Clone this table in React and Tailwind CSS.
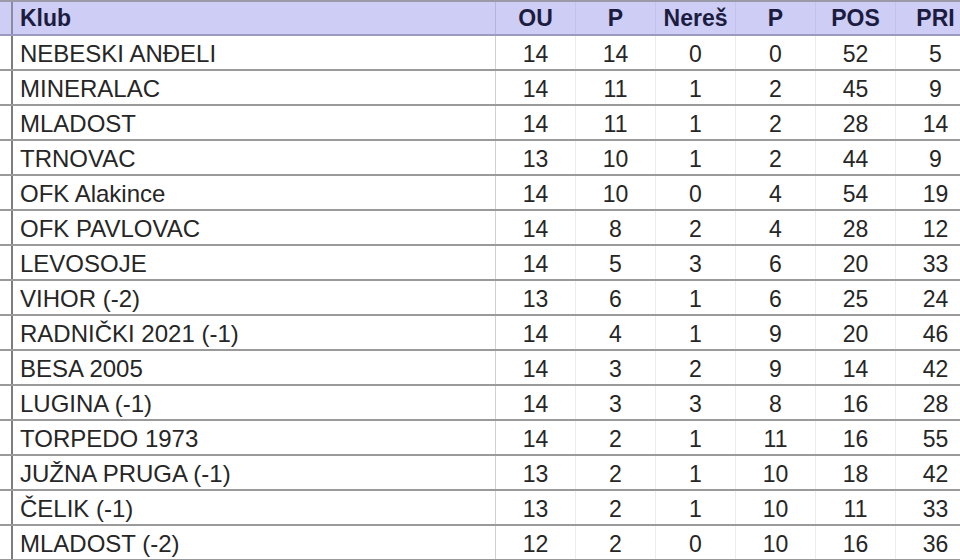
const ROWS = [
  ["NEBESKI ANĐELI", 14, 14, 0, 0, 52, 5],
  ["MINERALAC", 14, 11, 1, 2, 45, 9],
  ["MLADOST", 14, 11, 1, 2, 28, 14],
  ["TRNOVAC", 13, 10, 1, 2, 44, 9],
  ["OFK Alakince", 14, 10, 0, 4, 54, 19],
  ["OFK PAVLOVAC", 14, 8, 2, 4, 28, 12],
  ["LEVOSOJE", 14, 5, 3, 6, 20, 33],
  ["VIHOR (-2)", 13, 6, 1, 6, 25, 24],
  ["RADNIČKI 2021 (-1)", 14, 4, 1, 9, 20, 46],
  ["BESA 2005", 14, 3, 2, 9, 14, 42],
  ["LUGINA (-1)", 14, 3, 3, 8, 16, 28],
  ["TORPEDO 1973", 14, 2, 1, 11, 16, 55],
  ["JUŽNA PRUGA (-1)", 13, 2, 1, 10, 18, 42],
  ["ČELIK (-1)", 13, 2, 1, 10, 11, 33],
  ["MLADOST (-2)", 12, 2, 0, 10, 16, 36],
]

const HEAD = ["OU", "P", "Nereš", "P", "POS", "PRI"]

export default function App() {
  return (
    <div className="w-[960px] h-[560px] overflow-hidden bg-white font-['Liberation_Sans',Arial,sans-serif] text-[23px] text-[#262626]">
      <div className="w-[977px] border-t-2 border-[#9a9aa8]">
        {/* header */}
        <div className="flex h-[34px] bg-[#cdcdf6] border-b-2 border-[#9b9bc0]">
          <div className="w-[13px] border-r-2 border-[#8a8aa0]" />
          <div className="w-[483px] border-r border-[#b4b4e0] pl-[7px] pt-[1px] flex items-center font-bold text-[#1c1c40]">
            Klub
          </div>
          {HEAD.map((h, i) => (
            <div
              key={i}
              className="w-[80px] pt-[1px] flex items-center justify-center font-bold text-[#1c1c40] border-r border-[#c2c2ec]"
            >
              {h}
            </div>
          ))}
        </div>

        {ROWS.map((r, idx) => (
          <div key={idx} className="flex h-[35px] border-b-2 border-[#9a9a9a]">
            <div className="w-[13px] border-r-2 border-[#7d7d7d]" />
            <div className="w-[483px] border-r border-[#d0d0d0] pl-[7px] pt-[3px] flex items-center text-[24px]">
              {r[0]}
            </div>
            {r.slice(1).map((v, i) => (
              <div
                key={i}
                className="w-[80px] pt-[3px] flex items-center justify-center border-r border-[#ececec]"
              >
                {v}
              </div>
            ))}
          </div>
        ))}
      </div>
    </div>
  )
}
